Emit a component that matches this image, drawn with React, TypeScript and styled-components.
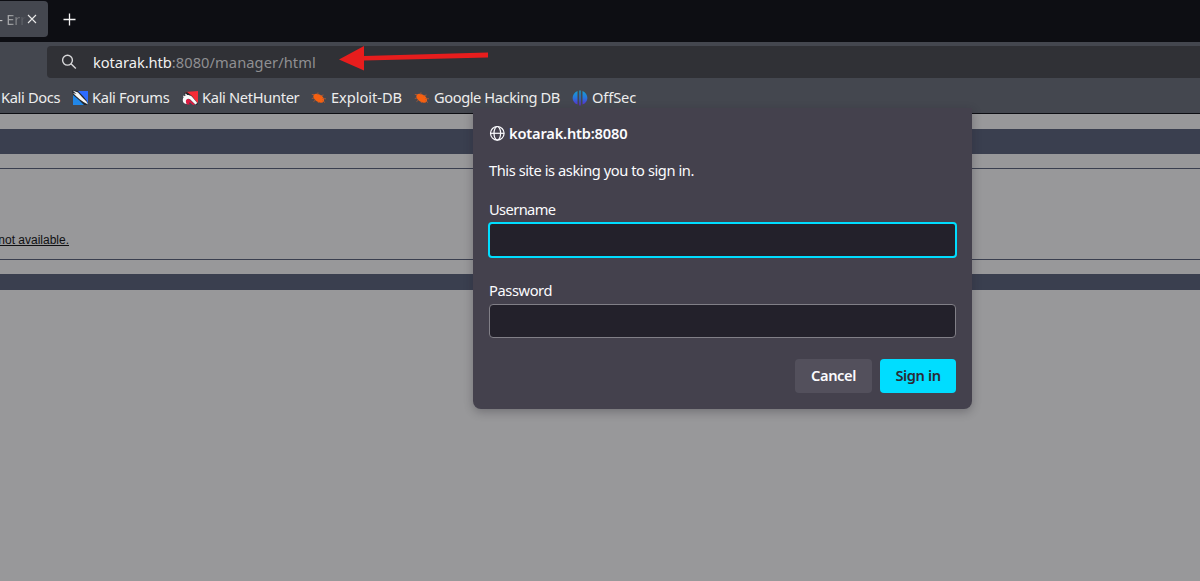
import React from "react";
import styled, { createGlobalStyle } from "styled-components";

const GlobalStyle = createGlobalStyle`
  *, *::before, *::after { box-sizing: border-box; }
  html, body, #root { margin: 0; height: 100%; overflow: hidden; }
  body { font-family: "Noto Sans", "Open Sans", sans-serif; font-size: 14px; }
`;

const Window = styled.div`
  position: relative;
  display: flex;
  flex-direction: column;
  width: 100%;
  height: 581px;
  overflow: hidden;
  background: #98989a;
`;

const TabStrip = styled.header`
  display: flex;
  flex: 0 0 42px;
  height: 42px;
  background: #0d0e13;
`;

const Tab = styled.div`
  display: flex;
  align-items: center;
  justify-content: flex-end;
  width: 48px;
  height: 36px;
  margin-top: 1px;
  padding-right: 11px;
  overflow: hidden;
  border-radius: 0 4px 4px 0;
  background: #44474f;
  svg { flex: none; }
`;

const TabTitle = styled.span`
  flex: none;
  margin-right: 1px;
  color: transparent;
  background: linear-gradient(90deg, #c5c5c5 10%, #85878b 65%, #44474f 100%);
  background-clip: text;
  font-size: 14.67px;
  line-height: 20px;
  letter-spacing: -0.2px;
  white-space: pre;
`;

const NewTab = styled.div`
  display: flex;
  align-items: center;
  height: 38px;
  margin-left: 15px;
`;

const UrlRow = styled.div`
  display: flex;
  flex: 0 0 40px;
  padding: 4px 0 4px 47px;
  background: #44474f;
`;

const UrlBar = styled.div`
  display: flex;
  align-items: center;
  flex: 1;
  height: 32px;
  padding-left: 14px;
  border-radius: 4px 0 0 4px;
  background: #303136;
`;

const UrlText = styled.span`
  margin-left: 16px;
  color: #8f8f92;
  font-size: 14.67px;
  line-height: 20px;
  letter-spacing: 0.07px;
  b { color: #f0f0f0; font-weight: 400; letter-spacing: -0.05px; }
`;

const Bookmarks = styled.nav`
  display: flex;
  align-items: center;
  flex: 0 0 32px;
  height: 32px;
  padding-left: 1px;
  border-bottom: 1px solid #0d0e13;
  background: #44474f;
`;

const Bookmark = styled.div<{ $width: number; $spacing: number }>`
  display: flex;
  flex: none;
  align-items: center;
  gap: 4px;
  width: ${(p) => p.$width}px;
  color: #ededed;
  svg { flex: none; }
  span {
    padding-bottom: 2px;
    font-size: 14.67px;
    line-height: 20px;
    letter-spacing: ${(p) => p.$spacing}px;
    white-space: nowrap;
  }
`;

const Page = styled.main`
  flex: 1;
  padding-top: 15px;
  color: #101012;
  font-family: "Liberation Sans", Arial, sans-serif;
`;

const Band = styled.div<{ $height: number }>`
  height: ${(p) => p.$height}px;
  background: #3a3f4f;
`;

const Detail = styled.section`
  height: 92px;
  margin: 14px 0;
  padding-top: 64px;
  border: solid #3a3f4f;
  border-width: 1px 0;
`;

const DetailText = styled.div`
  display: flex;
  justify-content: flex-end;
  width: 69px;
  font-size: 12px;
  line-height: 15px;
  white-space: nowrap;
`;

const Dialog = styled.form`
  position: absolute;
  top: 108px;
  left: 473px;
  display: flex;
  flex-direction: column;
  width: 499px;
  height: 301px;
  padding: 15px 16px 16px;
  border-radius: 0 0 8px 8px;
  background: #44414d;
  box-shadow: 0 3px 10px rgba(30, 28, 38, 0.3);
  color: #fbfbfe;
  font-size: 14.67px;
  line-height: 20px;
`;

const Origin = styled.div`
  display: flex;
  align-items: center;
  gap: 4px;
  height: 20px;
  font-weight: 600;
  letter-spacing: -0.2px;
`;

const Message = styled.div`
  margin-top: 17px;
  letter-spacing: -0.43px;
`;

const Field = styled.label<{ $top: number; $spacing: number }>`
  display: flex;
  flex-direction: column;
  gap: 4px;
  margin-top: ${(p) => p.$top}px;
  letter-spacing: ${(p) => p.$spacing}px;
`;

const Input = styled.div<{ $focused?: boolean }>`
  height: ${(p) => (p.$focused ? 36 : 34)}px;
  margin: ${(p) => (p.$focused ? "-1px" : "0")};
  border: ${(p) => (p.$focused ? "2px solid #00ddff" : "1px solid #817f87")};
  border-radius: 4px;
  background: #23212b;
`;

const Actions = styled.div`
  display: flex;
  justify-content: flex-end;
  gap: 8px;
  margin-top: 21px;
`;

const Button = styled.div<{ $primary?: boolean }>`
  display: flex;
  align-items: center;
  justify-content: center;
  width: ${(p) => (p.$primary ? 76 : 77)}px;
  height: 34px;
  padding-bottom: 2px;
  border-radius: 4px;
  color: ${(p) => (p.$primary ? "#2b2a33" : "#fbfbfe")};
  background: ${(p) => (p.$primary ? "#00ddff" : "#53505c")};
  font-weight: 600;
  letter-spacing: -0.4px;
`;

const Arrow = styled.svg`
  position: absolute;
  top: 44px;
  left: 336px;
`;

const Forums = () => (
  <svg width="16" height="16" viewBox="0 0 16 16">
    <path d="M1 1h15v14H1z" fill="#2187e8" />
    <path d="M5 1h11v12z" fill="#2d6cff" />
    <path d="M0 0 6 1 11 6 15 11 16 15 12 15 7 10 1 5z" fill="#24282f" />
    <path d="M.5.5 6 2.5 10 7l4.500 4.500 1.500 3-4.500-2.500L8 9.500 4.500 6.500 1 3l3.500 1z" fill="#f5f5f4" />
  </svg>
);

const Nethunter = () => (
  <svg width="16" height="16" viewBox="0 0 16 16">
    <path d="M3 2 16 1v12z" fill="#f52c36" />
    <path d="M2 3 5 2l5 4 6 8-2 1-4-4z" fill="#24262b" />
    <path d="M.8 10.500c0-5.500 5-7 9-4l5.500 6.500-2 1.500-5-5C5.500 7.500 3.500 10 5 14 2.500 14 .8 12.500.8 10.500z" fill="#fafafa" />
    <path d="M5 14.500c-2.500-3.500-.5-6.500 2.500-5l5.500 5-2 .5-3-2.500c-1.500-.5-1 1 0 2z" fill="#dc1b42" />
    <path d="m1 6 2 1m0-3 2 1" stroke="#fafafa" />
  </svg>
);

const Bug = () => (
  <svg width="16" height="16" viewBox="0 0 16 16">
    <ellipse cx="7.700" cy="8.200" rx="6" ry="3.700" transform="rotate(33 7.700 8.200)" fill="#f66010" />
    <path d="M.8 4.500H4M6.500 5 7 2.500M9 6l3.500-1M11 8.500l4 .3M3 8 .8 8.500M4.500 10l-2 1.600M7 11.500l.5 1.500M11 10.500l3 2" fill="none" stroke="#b95a30" strokeWidth=".8" />
  </svg>
);

const OffSec = () => (
  <svg width="16" height="16" viewBox="0 0 16 16">
    <defs>
      <linearGradient id="offsec" x2="0" y2="16" gradientUnits="userSpaceOnUse">
        <stop stopColor="#13a4cf" />
        <stop offset=".5" stopColor="#2874dc" />
        <stop offset="1" stopColor="#6424cd" />
      </linearGradient>
    </defs>
    <path d="M5.500 1v13.500C-1 12-1 4 5.500 1zm5 0v13.500C17 12 17 4 10.500 1zM7.300.5h1.400V15.500H7.300z" fill="url(#offsec)" />
  </svg>
);

const bookmarks = [
  { label: "Kali Docs", width: 71, spacing: -0.35, icon: null },
  { label: "Kali Forums", width: 110, spacing: -0.33, icon: <Forums /> },
  { label: "Kali NetHunter", width: 129, spacing: -0.33, icon: <Nethunter /> },
  { label: "Exploit-DB", width: 103, spacing: -0.05, icon: <Bug /> },
  { label: "Google Hacking DB", width: 158, spacing: -0.42, icon: <Bug /> },
  { label: "OffSec", width: 80, spacing: -0.12, icon: <OffSec /> },
];

export default function App() {
  return (
    <Window>
      <GlobalStyle />
      <TabStrip>
        <Tab>
          <TabTitle>- Err</TabTitle>
          <svg width="10" height="10" viewBox="0 0 10 10" fill="none" stroke="#e8e8e8" strokeWidth="1.1">
            <path d="m1 1 8 8m0-8L1 9" />
          </svg>
        </Tab>
        <NewTab>
          <svg width="13" height="13" viewBox="0 0 13 13" fill="none" stroke="#f4f4f4" strokeWidth="1.3">
            <path d="M6.5.5v12M.5 6.5h12" />
          </svg>
        </NewTab>
      </TabStrip>
      <UrlRow>
        <UrlBar>
          <svg width="16" height="16" viewBox="0 0 16 16" fill="none" stroke="#d8d8da" strokeWidth="1.4">
            <circle cx="6.5" cy="6.2" r="4.9" />
            <path d="m10 9.8 4.800 4.700" />
          </svg>
          <UrlText>
            <b>kotarak.htb</b>:8080/manager/html
          </UrlText>
        </UrlBar>
      </UrlRow>
      <Bookmarks>
        {bookmarks.map((b) => (
          <Bookmark key={b.label} $width={b.width} $spacing={b.spacing}>
            {b.icon}
            <span>{b.label}</span>
          </Bookmark>
        ))}
      </Bookmarks>
      <Page>
        <Band $height={25} />
        <Detail>
          <DetailText>
            <u>not available.</u>
          </DetailText>
        </Detail>
        <Band $height={16} />
      </Page>
      <Arrow width="156" height="30" viewBox="0 0 156 30">
        <path d="M3 15.5 28 2v10l124-3.5v5L28 16.5v10z" fill="#e71d1d" />
      </Arrow>
      <Dialog>
        <Origin>
          <svg width="16" height="16" viewBox="0 0 16 16" fill="none" stroke="#fbfbfe" strokeWidth="1.2">
            <circle cx="8.3" cy="8.3" r="6.8" />
            <ellipse cx="8.3" cy="8.3" rx="3.3" ry="6.8" />
            <path d="M1.5 8.3h13.6" />
          </svg>
          <span>kotarak.htb:8080</span>
        </Origin>
        <Message>This site is asking you to sign in.</Message>
        <Field $top={19} $spacing={-0.6}>
          Username
          <Input $focused />
        </Field>
        <Field $top={23} $spacing={-0.4}>
          Password
          <Input />
        </Field>
        <Actions>
          <Button>Cancel</Button>
          <Button $primary>Sign in</Button>
        </Actions>
      </Dialog>
    </Window>
  );
}
